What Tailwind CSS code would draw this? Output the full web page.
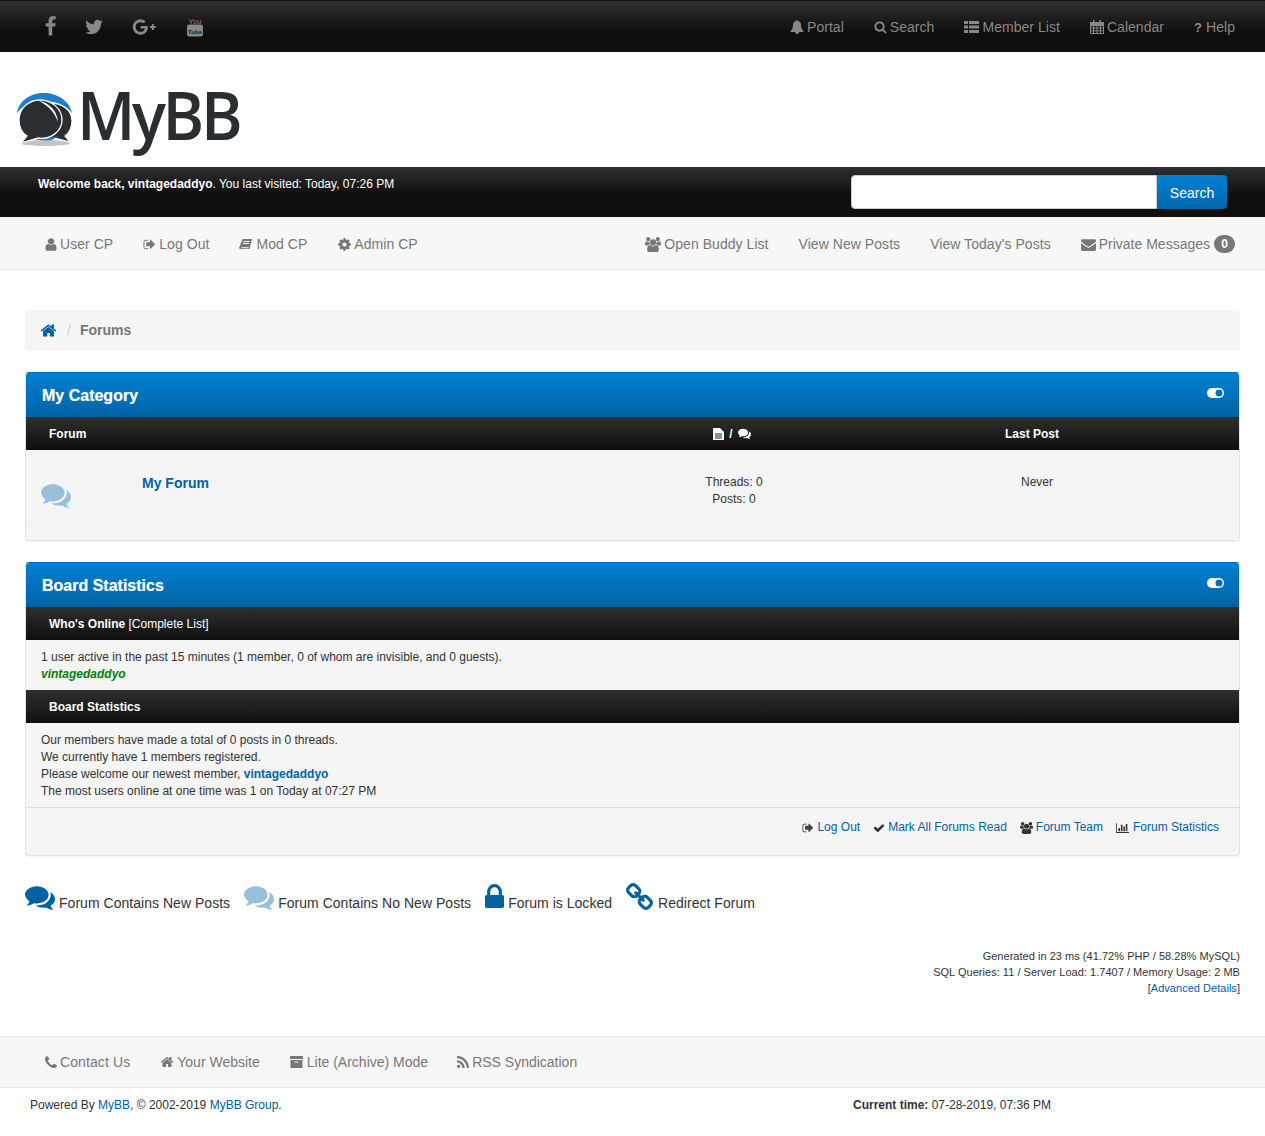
<!DOCTYPE html>
<html lang="en"><head><meta charset="utf-8"><title>Forums</title>
<script src="https://cdn.jsdelivr.net/npm/@tailwindcss/browser@4"></script></head>
<body class="bg-white font-['Liberation_Sans',Arial,sans-serif] text-[12px] leading-[17px] text-[#333]">
<div class="h-[52px] border-t border-t-[#111] bg-[linear-gradient(#2f2f2f,#0f0f0f_60%)] flex items-center justify-between pl-[30px] pr-[30px] pt-[2px] text-[14px] tracking-[0.04px] text-[#888]">
  <div class="flex items-center h-full -mt-[2px]">
    <svg class="w-[21px] h-[21px] ml-[10px] fill-[#888]" viewBox="0 0 1792 1792"><path d="M1343 12v264h-157q-86 0-116 36t-30 108v189h293l-39 296h-254v759H734V905H479V609h255V391q0-186 104-288.500T1115 0q147 0 228 12z"/></svg>
    <svg class="w-[20px] h-[20px] ml-[23px] fill-[#888]" viewBox="0 0 1792 1792"><path d="M1684 408q-67 98-162 167 1 14 1 42 0 130-38 259.500T1369.500 1125 1185 1335.500t-258 146-323 54.500q-271 0-496-145 35 4 78 4 225 0 401-138-105-2-188-64.500T285 1033q33 5 61 5 43 0 85-11-112-23-185.500-111.500T172 710v-4q68 38 146 41-66-44-105-115t-39-154q0-88 44-163 121 149 294.500 238.500T884 653q-8-38-8-74 0-134 94.500-228.500T1199 256q140 0 236 102 109-21 205-78-37 115-142 178 100-13 186-50z"/></svg>
    <svg class="w-[26px] h-[18px] ml-[27px] fill-[#888]" viewBox="0 0 2500 1792"><path d="M896 786h725q12 67 12 128 0 217-91 387.500t-259.500 266.500-386.500 96q-157 0-299-60.500T352 1440t-163.500-245T128 896t60.500-299T352 352t245-163.500T896 128q300 0 515 201l-209 201q-123-119-306-119-129 0-238.500 65T484 652.500 420 896t64 243.500 173.500 176.500 238.500 65q87 0 160-24t120-60 82-82 51.500-87 22.500-78H896V786z"/><path d="M2030 600h190v200h190v190h-190v200h-190V990h-190V800h190z"/></svg>
    <svg class="w-[18px] h-[20px] ml-[29px]" viewBox="0 0 18 20"><text x="9" y="6.500" text-anchor="middle" font-size="7.500" fill="#888" font-family="Liberation Sans">You</text><rect x="1" y="7.500" width="16" height="12" rx="2.500" fill="#888"/><text x="9" y="16.500" text-anchor="middle" font-size="6" font-weight="bold" fill="#1a1a1a" font-family="Liberation Sans">Tube</text></svg>
  </div>
  <nav class="flex items-center">
    <a class="flex items-center gap-[3px]"><svg class="w-[14px] h-[14px] -mt-[2px] fill-[#888]" viewBox="0 0 1792 1792"><path d="M912 1696q0-16-16-16-59 0-101.500-42.500T752 1536q0-16-16-16t-16 16q0 73 51.500 124.500T896 1712q16 0 16-16zm816-288q0 52-38 90t-90 38h-448q0 106-75 181t-181 75-181-75-75-181H192q-52 0-90-38t-38-90q50-42 91-88t85-119.500 74.500-158.500 50-206T384 576q0-152 117-282.500T808 135q-8-19-8-39 0-40 28-68t68-28 68 28 28 68q0 20-8 39 190 28 307 158.500T1408 576q0 139 19.500 260t50 206 74.500 158.500 85 119.500 91 88z"/></svg>Portal</a>
    <a class="flex items-center gap-[3px] ml-[30px]"><svg class="w-[13px] h-[14px] -mt-[2px] fill-[#888]" viewBox="0 0 1792 1792"><path d="M1216 832q0-185-131.500-316.500T768 384 451.500 515.500 320 832t131.500 316.500T768 1280t316.500-131.500T1216 832zm512 832q0 52-38 90t-90 38q-54 0-90-38l-343-342q-179 124-399 124-143 0-273.500-55.500t-225-150-150-225T64 832t55.500-273.500 150-225 225-150T768 128t273.500 55.500 225 150 150 225T1472 832q0 220-124 399l343 343q37 37 37 90z"/></svg>Search</a>
    <a class="flex items-center gap-[3px] ml-[30px]"><svg class="w-[15px] h-[12px] -mt-[2px] fill-[#888]" viewBox="0 0 15 12"><path d="M0 0h4v3H0zM5 0h10v3H5zM0 4.500h4v3H0zM5 4.500h10v3H5zM0 9h4v3H0zM5 9h10v3H5z"/></svg>Member List</a>
    <a class="flex items-center gap-[3px] ml-[30px]"><svg class="w-[14px] h-[14px] -mt-[2px]" viewBox="0 0 14 14"><path fill="none" stroke="#888" d="M.5 2.500h13v11H.5zM.5 5.500h13M.5 8h13M.5 10.800h13M3.500 5.500v8M7 5.500v8M10.500 5.500v8"/><path fill="#888" d="M3 0h1.500v3.500H3zM9.500 0H11v3.500H9.500zM0 2h14v3H0z"/></svg>Calendar</a>
    <a class="flex items-center gap-[3px] ml-[30px]"><span class="font-bold w-[9px] text-[13px]">?</span>Help</a>
  </nav>
</div>
<header class="h-[115px] flex items-start pl-[16px] pt-[29px]">
  <svg class="w-[58px] h-[56px] mt-[12px]" viewBox="0 0 58 56">
    <ellipse cx="29" cy="50" rx="25" ry="3" fill="#c4c4c4"/>
    <path d="M1 20C3 7 15 0 28 0s26 8 28 20c-5-7-15-12-28-12S6 13 1 20z" fill="#1d7fcb"/>
    <path d="M33 10c13 0 23 7 23 18 0 7-3 12-7 15l5 6-15-4c-9 2-18-2-20-10z" fill="#2a2e30" stroke="#fff" stroke-width="1.200"/>
    <path d="M15 44c8 2 22 2 29-2l-8 5c-6 1-15 1-21-3z" fill="#1d7fcb"/>
    <path d="M24 7C12 7 3 16 3 27c0 7 3 13 8 16L5 50l17-5c13 2 24-7 24-18C46 16 36 7 24 7z" fill="#2a2e30" stroke="#fff" stroke-width="1.300"/>
    <path d="M23 8c9 1 18 9 19 21-3-9-9-16-19-21z" fill="#fff"/>
  </svg>
  <span class="ml-[3px] font-['Open_Sans',sans-serif] font-semibold text-[67px] leading-none tracking-[-3.500px] text-[#2a2e30] inline-block origin-left scale-x-[0.945]">MyBB</span>
</header>
<div class="h-[50px] bg-[linear-gradient(#2f2f2f,#0f0f0f_55%)] flex justify-between pl-[38px] pr-[38px] pt-[8px] text-white">
  <p class="leading-[17px] pt-[1px]"><b>Welcome back, vintagedaddyo</b>. You last visited: Today, 07:26 PM</p>
  <div class="flex h-[34px]">
    <input aria-label="Search" class="w-[306px] h-[34px] bg-white rounded-l-[4px] border border-[#ccc]">
    <button class="w-[70px] h-[34px] pt-[2px] rounded-r-[4px] bg-[linear-gradient(#0080d4,#0066ac)] text-[14px] text-white text-center">Search</button>
  </div>
</div>
<nav class="h-[53px] bg-[#f7f7f7] border-b border-[#e7e7e7] flex items-center justify-between pt-[2px] px-[30px] text-[14px] tracking-[0.05px] text-[#777]">
  <div class="flex gap-[30px] pl-[15px]">
    <a class="flex items-center gap-[3px]"><svg class="w-[12px] h-[13px] fill-[#777]" viewBox="200 100 1392 1592" preserveAspectRatio="none"><path d="M1536 1399q0 109-62.500 187t-150.500 78H469q-88 0-150.500-78T256 1399q0-85 8.500-160.500t31.500-152 58.500-131 94-89T583 832q131 128 313 128t313-128q76 0 134.500 34.500t94 89 58.500 131 31.500 152 8.500 160.500zm-256-887q0 159-112.500 271.500T896 896 624.500 783.500 512 512t112.500-271.500T896 128t271.500 112.500T1280 512z"/></svg>User CP</a>
    <a class="flex items-center gap-[3px]"><svg class="w-[13px] h-[13px] fill-[#777]" viewBox="0 0 1792 1792"><path d="M704 1440q0 4 1 20t.5 26.500-3 23.500-10 19.500T672 1536H352q-119 0-203.500-84.500T64 1248V544q0-119 84.500-203.500T352 256h320q13 0 22.500 9.500T704 288q0 4 1 20t.5 26.500-3 23.500-10 19.500T672 384H352q-66 0-113 47t-47 113v704q0 66 47 113t113 47h312l11.500 1 11.500 3 8 5.500 7 9 2 13.500zm928-544q0 26-19 45l-544 544q-19 19-45 19t-45-19-19-45v-288H512q-26 0-45-19t-19-45V640q0-26 19-45t45-19h448V288q0-26 19-45t45-19 45 19l544 544q19 19 19 45z"/></svg>Log Out</a>
    <a class="flex items-center gap-[4px]"><svg class="w-[13px] h-[13px]" viewBox="0 0 13 13"><path fill="#777" d="M3.500 1H13l-2.500 10H1.300C.5 11 0 10.300.3 9.300z"/><path fill="#f7f7f7" d="M4.500 3h6v1h-6zM4 5h6v1H4zM2.500 9.200h7.200l-.3 1H2.300z"/></svg>Mod CP</a>
    <a class="flex items-center gap-[3px] ml-[1px]"><svg class="w-[13px] h-[13px] fill-[#777]" viewBox="100 100 1592 1592"><path d="M1152 896q0-106-75-181t-181-75-181 75-75 181 75 181 181 75 181-75 75-181zm512-109v222q0 12-8 23t-20 13l-185 28q-19 54-39 91 35 50 107 138 10 12 10 25t-9 23q-27 37-99 108t-94 71q-12 0-26-9l-138-108q-44 23-91 38-16 136-29 186-7 28-36 28H785q-14 0-24.500-8.500T749 1634l-28-184q-49-16-90-37l-141 107q-10 9-25 9-14 0-25-11-126-114-165-168-7-10-7-23 0-12 8-23 15-21 51-66.500t54-70.500q-27-50-41-99l-183-27q-13-2-21-12.500t-8-23.500V783q0-12 8-23t19-13l186-28q14-46 39-92-40-57-107-138-10-12-10-24 0-10 9-23 26-36 98.500-107.500T465 263q13 0 26 10l138 107q44-23 91-38 16-136 29-186 7-28 36-28h222q14 0 24.500 8.500T1043 158l28 184q49 16 90 37l142-107q9-9 24-9 13 0 25 10 129 119 165 170 7 8 7 22 0 12-8 23-15 21-51 66.500t-54 70.500q26 50 41 98l183 28q13 2 21 12.500t8 23.500z"/></svg>Admin CP</a>
  </div>
  <div class="flex items-center gap-[30px]">
    <a class="flex items-center gap-[3px]"><svg class="w-[16px] h-[15px] fill-[#777]" viewBox="0 0 1920 1792"><path d="M593 896q-162 5-265 128H194q-82 0-138-40.500T0 865q0-353 124-353 6 0 43.500 21t97.500 42.500T384 597q67 0 133-23-5 37-5 66 0 139 81 256zm1071 637q0 120-73 189.500t-194 69.500H523q-121 0-194-69.500T256 1533q0-53 3.500-103.500t14-109T300 1212t43-97.500 62-81 85.500-53.500T602 960q10 0 43 21.500t73 48 107 48 135 21.500 135-21.500 107-48 73-48 43-21.500q61 0 111.500 20t85.500 53.500 62 81 43 97.500 26.500 108.500 14 109 3.500 103.500zM640 256q0 106-75 181t-181 75-181-75-75-181 75-181 181-75 181 75 75 181zm704 384q0 159-112.500 271.500T960 1024 688.500 911.500 576 640t112.500-271.500T960 256t271.500 112.500T1344 640zm576 225q0 78-56 118.500t-138 40.500h-134q-103-123-265-128 81-117 81-256 0-29-5-66 66 23 133 23 59 0 119-21.500t97.500-42.500 43.500-21q124 0 124 353zm-128-609q0 106-75 181t-181 75-181-75-75-181 75-181 181-75 181 75 75 181z"/></svg>Open Buddy List</a>
    <a>View New Posts</a>
    <a>View Today's Posts</a>
    <a class="flex items-center gap-[3px] tracking-normal"><svg class="w-[15px] h-[15px] fill-[#777]" viewBox="0 0 1792 1792"><path d="M1792 710v794q0 66-47 113t-113 47H160q-66 0-113-47T0 1504V710q44 49 101 87 362 246 497 345 57 42 92.500 65.500t94.500 48 110 24.500h2q51 0 110-24.500t94.500-48 92.500-65.500q170-123 498-345 57-39 100-87zm0-294q0 79-49 151t-122 123q-376 261-468 325-10 7-42.500 30.500t-54 38-52 32.500-57.500 27-50 9h-2q-23 0-50-9t-57.500-27-52-32.500-54-38T639 1015q-91-64-262-182.500T172 690q-62-42-117-115.500T0 438q0-78 41.500-130T160 256h1472q65 0 112.500 47t47.500 113z"/></svg>Private Messages<span class="ml-[1px] w-[21px] h-[18px] rounded-full bg-[#777] text-white text-[12px] font-bold flex items-center justify-center">0</span></a>
  </div>
</nav>
<main class="px-[25px] pt-[40px]">
  <div class="h-[41px] bg-[#f5f5f5] rounded-[4px] flex items-center pl-[15px] text-[14px]">
    <svg class="w-[17px] h-[17px] fill-[#0062a3]" viewBox="0 0 1792 1792"><path d="M1472 992v480q0 26-19 45t-45 19h-384v-384H768v384H384q-26 0-45-19t-19-45V992q0-1 .5-3t.5-3l575-474 575 474q1 2 1 6zm223-69l-62 74q-8 9-21 11h-3q-13 0-21-7L896 424l-692 577q-12 8-24 7-13-2-21-11l-62-74q-8-10-7-23.500t11-21.500l719-599q32-26 76-26t76 26l244 204V288q0-14 9-23t23-9h192q14 0 23 9t9 23v408l219 182q10 8 11 21.500t-7 23.500z"/></svg>
    <span class="text-[#ccc] ml-[10px] mr-[9px]">/</span><b class="text-[#777]">Forums</b>
  </div>

  <section class="mt-[21px] border border-[#e3e3e3] border-t-[#0070bb] rounded-[4px] bg-[#f5f5f5] shadow-[0_1px_1px_rgba(0,0,0,.05)] overflow-hidden">
    <h2 class="h-[44px] bg-[linear-gradient(#0080d4,#0063a3)] flex items-center justify-between pl-[16px] pr-[15px] text-[16px] font-bold text-white [text-shadow:0_0_1px_rgba(255,255,255,.5)]"><span>My Category</span>
      <svg class="w-[17px] h-[10px] -mt-[4px]" viewBox="0 0 17 10"><rect width="17" height="10" rx="5" fill="#fff"/><circle cx="12" cy="5" r="3.500" fill="#0070bb"/></svg></h2>
    <div class="h-[33px] bg-[linear-gradient(#2f2f2f,#0f0f0f)] grid grid-cols-[633px_100px_1fr] items-center pt-[2px] pl-[23px] text-white font-bold">
      <span>Forum</span>
      <span class="flex items-center justify-center gap-[5px]"><svg class="w-[11px] h-[12px] -mt-[2px] fill-white" viewBox="0 0 11 12"><path d="M0 0h7l4 4v8H0z"/><path fill="#222" d="M2 5.500h7v1H2zM2 7.500h7v1H2zM2 9.500h7v1H2z"/></svg>/<svg class="w-[13px] h-[13px] -mt-[2px] fill-white" viewBox="0 0 1792 1792"><path d="M1408 768q0 139-94 257t-256.500 186.500T704 1280q-86 0-176-16-124 88-278 128-36 9-86 16h-3q-11 0-20.500-8t-11.500-21q-1-3-1-6.500t.5-6.500 2-6l2.500-5 3.500-5.500 4-5 4.500-5 4-4.500q5-6 23-25t26-29.500 22.500-29 25-38.500 20.500-44Q142 1062 71 952T0 768q0-139 94-257t256.500-186.500T704 256t353.500 68.500T1314 511t94 257zm384 256q0 120-71 224.500T1526 1425q10 24 20.500 44t25 38.500 22.500 29 26 29.500 23 25q1 1 4 4.500t4.500 5 4 5 3.500 5.500l2.500 5 2 6 .5 6.500-1 6.500q-3 14-13 22t-22 7q-50-7-86-16-154-40-278-128-90 16-176 16-271 0-472-132 58 4 88 4 161 0 309-45t264-129q125-92 192-212t67-254q0-77-23-152 129 71 204 178t75 230z"/></svg></span>
      <span class="pl-[223px]">Last Post</span>
    </div>
    <div class="h-[74px] border-b border-[#f0f0f0] grid grid-cols-[101px_532px_120px_1fr] pl-[15px]">
      <svg class="w-[30px] h-[30px] mt-[30px] fill-[#99c0da]" viewBox="0 0 1792 1792"><path d="M1408 768q0 139-94 257t-256.500 186.500T704 1280q-86 0-176-16-124 88-278 128-36 9-86 16h-3q-11 0-20.500-8t-11.500-21q-1-3-1-6.500t.5-6.500 2-6l2.500-5 3.500-5.500 4-5 4.500-5 4-4.500q5-6 23-25t26-29.500 22.500-29 25-38.500 20.500-44Q142 1062 71 952T0 768q0-139 94-257t256.500-186.500T704 256t353.500 68.500T1314 511t94 257zm384 256q0 120-71 224.500T1526 1425q10 24 20.500 44t25 38.500 22.500 29 26 29.500 23 25q1 1 4 4.500t4.500 5 4 5 3.500 5.500l2.500 5 2 6 .5 6.500-1 6.500q-3 14-13 22t-22 7q-50-7-86-16-154-40-278-128-90 16-176 16-271 0-472-132 58 4 88 4 161 0 309-45t264-129q125-92 192-212t67-254q0-77-23-152 129 71 204 178t75 230z"/></svg>
      <a class="mt-[25px] text-[14px] font-bold text-[#0062a3]">My Forum</a>
      <div class="pt-[24px] text-center">Threads: 0<br>Posts: 0</div>
      <div class="pt-[24px] pl-[227px]">Never</div>
    </div>
    <div class="h-[16px]"></div>
  </section>

  <section class="mt-[21px] border border-[#e3e3e3] border-t-[#0070bb] rounded-[4px] bg-[#f5f5f5] shadow-[0_1px_1px_rgba(0,0,0,.05)] overflow-hidden">
    <h2 class="h-[44px] bg-[linear-gradient(#0080d4,#0063a3)] flex items-center justify-between pl-[16px] pr-[15px] text-[16px] font-bold text-white [text-shadow:0_0_1px_rgba(255,255,255,.5)]"><span>Board Statistics</span>
      <svg class="w-[17px] h-[10px] -mt-[4px]" viewBox="0 0 17 10"><rect width="17" height="10" rx="5" fill="#fff"/><circle cx="12" cy="5" r="3.500" fill="#0070bb"/></svg></h2>
    <div class="h-[33px] bg-[linear-gradient(#2f2f2f,#0f0f0f)] flex items-center pt-[2px] pl-[23px] text-white"><b>Who's Online</b>&nbsp;[Complete List]</div>
    <div class="px-[15px] pt-[9px] pb-[7px]">1 user active in the past 15 minutes (1 member, 0 of whom are invisible, and 0 guests).<br><i class="font-bold text-[#008000]">vintagedaddyo</i></div>
    <div class="h-[33px] bg-[linear-gradient(#2f2f2f,#0f0f0f)] flex items-center pt-[2px] pl-[23px] text-white font-bold">Board Statistics</div>
    <div class="px-[15px] pt-[9px] pb-[7px]">Our members have made a total of 0 posts in 0 threads.<br>We currently have 1 members registered.<br>Please welcome our newest member, <b class="text-[#0062a3]">vintagedaddyo</b><br>The most users online at one time was 1 on Today at 07:27 PM</div>
    <div class="h-[48px] border-t border-[#ddd] flex justify-end gap-[13px] pt-[11px] pr-[20px] text-[#0062a3]">
      <a class="flex items-center h-[17px] gap-[3px]"><svg class="w-[12px] h-[12px] fill-[#444]" viewBox="0 0 1792 1792"><path d="M704 1440q0 4 1 20t.5 26.500-3 23.500-10 19.500T672 1536H352q-119 0-203.500-84.500T64 1248V544q0-119 84.500-203.500T352 256h320q13 0 22.500 9.500T704 288q0 4 1 20t.5 26.500-3 23.500-10 19.500T672 384H352q-66 0-113 47t-47 113v704q0 66 47 113t113 47h312l11.500 1 11.500 3 8 5.500 7 9 2 13.500zm928-544q0 26-19 45l-544 544q-19 19-45 19t-45-19-19-45v-288H512q-26 0-45-19t-19-45V640q0-26 19-45t45-19h448V288q0-26 19-45t45-19 45 19l544 544q19 19 19 45z"/></svg>Log Out</a>
      <a class="flex items-center h-[17px] gap-[3px]"><svg class="w-[12px] h-[12px] fill-[#333]" viewBox="0 0 1792 1792"><path d="M1671 566q0 40-28 68l-724 724-136 136q-28 28-68 28t-68-28l-136-136-362-362q-28-28-28-68t28-68l136-136q28-28 68-28t68 28l294 295 656-657q28-28 68-28t68 28l136 136q28 28 28 68z"/></svg>Mark All Forums Read</a>
      <a class="flex items-center h-[17px] gap-[3px]"><svg class="w-[13px] h-[12px] fill-[#333]" viewBox="0 0 1920 1792"><path d="M593 896q-162 5-265 128H194q-82 0-138-40.500T0 865q0-353 124-353 6 0 43.500 21t97.500 42.500T384 597q67 0 133-23-5 37-5 66 0 139 81 256zm1071 637q0 120-73 189.500t-194 69.500H523q-121 0-194-69.500T256 1533q0-53 3.500-103.500t14-109T300 1212t43-97.500 62-81 85.500-53.500T602 960q10 0 43 21.500t73 48 107 48 135 21.500 135-21.500 107-48 73-48 43-21.500q61 0 111.500 20t85.500 53.500 62 81 43 97.500 26.500 108.500 14 109 3.500 103.500zM640 256q0 106-75 181t-181 75-181-75-75-181 75-181 181-75 181 75 75 181zm704 384q0 159-112.500 271.500T960 1024 688.500 911.500 576 640t112.500-271.500T960 256t271.500 112.500T1344 640zm576 225q0 78-56 118.500t-138 40.500h-134q-103-123-265-128 81-117 81-256 0-29-5-66 66 23 133 23 59 0 119-21.500t97.500-42.500 43.500-21q124 0 124 353zm-128-609q0 106-75 181t-181 75-181-75-75-181 75-181 181-75 181 75 75 181z"/></svg>Forum Team</a>
      <a class="flex items-center h-[17px] gap-[4px]"><svg class="w-[13px] h-[12px] fill-[#333]" viewBox="0 0 2048 1792"><path d="M640 896v512H384V896h256zm384-512v1024H768V384h256zm1024 1152v128H0V128h128v1408h1920zm-640-896v768h-256V640h256zm384-384v1152h-256V256h256z"/></svg>Forum Statistics</a>
    </div>
  </section>

  <div class="mt-[26px] flex items-end text-[14px] tracking-[0.03px] h-[30px]">
    <span class="flex items-end gap-[4px]"><svg class="w-[30px] h-[30px] fill-[#0062a3]" viewBox="0 0 1792 1792"><path d="M1408 768q0 139-94 257t-256.500 186.500T704 1280q-86 0-176-16-124 88-278 128-36 9-86 16h-3q-11 0-20.500-8t-11.500-21q-1-3-1-6.500t.5-6.500 2-6l2.500-5 3.500-5.500 4-5 4.500-5 4-4.500q5-6 23-25t26-29.500 22.500-29 25-38.500 20.500-44Q142 1062 71 952T0 768q0-139 94-257t256.500-186.500T704 256t353.500 68.500T1314 511t94 257zm384 256q0 120-71 224.500T1526 1425q10 24 20.500 44t25 38.500 22.500 29 26 29.500 23 25q1 1 4 4.500t4.500 5 4 5 3.500 5.500l2.500 5 2 6 .5 6.500-1 6.500q-3 14-13 22t-22 7q-50-7-86-16-154-40-278-128-90 16-176 16-271 0-472-132 58 4 88 4 161 0 309-45t264-129q125-92 192-212t67-254q0-77-23-152 129 71 204 178t75 230z"/></svg><span>Forum Contains New Posts</span></span>
    <span class="flex items-end gap-[4px] ml-[14px]"><svg class="w-[30px] h-[30px] fill-[#99c0da]" viewBox="0 0 1792 1792"><path d="M1408 768q0 139-94 257t-256.500 186.500T704 1280q-86 0-176-16-124 88-278 128-36 9-86 16h-3q-11 0-20.500-8t-11.500-21q-1-3-1-6.500t.5-6.500 2-6l2.500-5 3.500-5.500 4-5 4.500-5 4-4.500q5-6 23-25t26-29.500 22.500-29 25-38.500 20.500-44Q142 1062 71 952T0 768q0-139 94-257t256.500-186.500T704 256t353.500 68.500T1314 511t94 257zm384 256q0 120-71 224.500T1526 1425q10 24 20.500 44t25 38.500 22.500 29 26 29.500 23 25q1 1 4 4.500t4.500 5 4 5 3.500 5.500l2.500 5 2 6 .5 6.500-1 6.500q-3 14-13 22t-22 7q-50-7-86-16-154-40-278-128-90 16-176 16-271 0-472-132 58 4 88 4 161 0 309-45t264-129q125-92 192-212t67-254q0-77-23-152 129 71 204 178t75 230z"/></svg><span>Forum Contains No New Posts</span></span>
    <span class="flex items-end gap-[4px] ml-[14px]"><svg class="w-[19px] h-[24px] mb-[4px] fill-[#0062a3]" viewBox="320 128 1152 1408" preserveAspectRatio="none"><path d="M640 768h512V576q0-106-75-181t-181-75-181 75-75 181v192zm832 96v576q0 40-28 68t-68 28H416q-40 0-68-28t-28-68V864q0-40 28-68t68-28h32V576q0-184 132-316t316-132 316 132 132 316v192h32q40 0 68 28t28 68z"/></svg><span>Forum is Locked</span></span>
    <span class="flex items-end gap-[5px] ml-[14px]"><svg class="w-[27px] h-[27px] mb-[2px] fill-[#0062a3]" viewBox="16 16 1632 1632"><path d="M1456 1216q0-40-28-68l-208-208q-28-28-68-28-42 0-72 32 3 3 19 18.500t21.500 21.500 15 19 13 25.500 3.500 27.500q0 40-28 68t-68 28q-15 0-27.500-3.500t-25.500-13-19-15-21.500-21.500-18.500-19q-33 31-33 73 0 40 28 68l206 207q27 27 68 27 40 0 68-26l147-146q28-28 28-67zM753 511q0-40-28-68L519 236q-28-28-68-28-39 0-68 27L236 381q-28 28-28 67 0 40 28 68l208 208q27 27 68 27 42 0 72-31-3-3-19-18.500T543.500 680t-15-19-13-25.500T512 608q0-40 28-68t68-28q15 0 27.500 3.500t25.500 13 19 15 21.500 21.500 18.500 19q33-31 33-73zm895 705q0 120-85 203l-147 146q-83 83-203 83-121 0-204-85L803 1356q-83-83-83-203 0-123 88-209l-88-88q-86 88-208 88-120 0-204-84L100 652q-84-84-84-204t85-203L248 99q83-83 203-83 121 0 204 85l206 207q83 83 83 203 0 123-88 209l88 88q86-88 208-88 120 0 204 84l208 208q84 84 84 204z"/></svg><span>Redirect Forum</span></span>
  </div>

  <div class="mt-[36px] text-right text-[11px] leading-[16px] tracking-[0.03px]">Generated in 23 ms (41.72% PHP / 58.28% MySQL)<br>SQL Queries: 11 / Server Load: 1.7407 / Memory Usage: 2 MB<br>[<a class="text-[#0062a3]">Advanced Details</a>]</div>
</main>
<footer class="mt-[40px]">
  <nav class="h-[52px] bg-[#f7f7f7] border-y border-[#e7e7e7] flex items-center gap-[30px] pl-[45px] text-[14px] text-[#777]">
    <a class="flex items-center gap-[3px] tracking-[0.1px]"><svg class="w-[12px] h-[13px] fill-[#777]" viewBox="190 160 1420 1440"><path d="M1600 1240q0 27-10 70.500t-21 68.500q-21 50-122 106-94 51-186 51-27 0-53-3.500t-57.500-12.500-47-14.500-55.500-20.500-49-18q-98-35-175-83-127-79-264-216T344 904q-48-77-83-175-3-9-18-49t-20.500-55.500-14.500-47T195.500 520 192 467q0-92 51-186 56-101 106-122 25-11 68.500-21t70.500-10q14 0 21 3 18 6 53 76 11 19 30 54t35 63.500 31 53.500q3 4 17.500 25t21.500 35.500 7 28.500q0 20-28.500 50t-62 55-62 53-28.500 46q0 9 5 22.500t8.500 20.500 14 24 11.500 19q76 137 174 235t235 174q2 1 19 11.500t24 14 20.500 8.500 22.500 5q18 0 46-28.500t53-62 55-62 50-28.500q14 0 28.500 7t35.500 21.500 25 17.500q25 15 53.500 31t63.500 35 54 30q70 35 76 53 3 7 3 21z"/></svg>Contact Us</a>
    <a class="flex items-center gap-[3px]"><svg class="w-[14px] h-[14px] fill-[#777]" viewBox="0 0 1792 1792"><path d="M1472 992v480q0 26-19 45t-45 19h-384v-384H768v384H384q-26 0-45-19t-19-45V992q0-1 .5-3t.5-3l575-474 575 474q1 2 1 6zm223-69l-62 74q-8 9-21 11h-3q-13 0-21-7L896 424l-692 577q-12 8-24 7-13-2-21-11l-62-74q-8-10-7-23.500t11-21.500l719-599q32-26 76-26t76 26l244 204V288q0-14 9-23t23-9h192q14 0 23 9t9 23v408l219 182q10 8 11 21.500t-7 23.500z"/></svg>Your Website</a>
    <a class="flex items-center gap-[4px]"><svg class="w-[13px] h-[12px] fill-[#777]" viewBox="0 0 13 12"><path d="M0 0h13v3H0z"/><path fill-rule="evenodd" d="M.5 4h12v8H.5zM4.500 5.500v1h4v-1z"/></svg>Lite (Archive) Mode</a>
    <a class="flex items-center gap-[3px] -ml-[1px]"><svg class="w-[12px] h-[12px] fill-[#777]" viewBox="192 128 1408 1408"><path d="M576 1344q0 80-56 136t-136 56-136-56-56-136 56-136 136-56 136 56 56 136zm512 123q2 28-17 48-18 21-47 21H889q-25 0-43-16.500t-20-41.500q-22-229-184.500-391.500T250 902q-25-2-41.500-20T192 839V704q0-29 21-47 17-17 43-17h5q160 13 306 80.500T826 902q114 113 181.500 259t80.500 306zm512 2q2 27-18 47-18 20-46 20h-143q-26 0-44.500-17.500T1329 1476q-12-215-101-408.500t-231.500-336-336-231.500T252 398q-25-1-42.500-19.500T192 335V192q0-28 20-46 18-18 44-18h3q262 13 501.500 120T1186 542q187 186 294 425.500T1600 1469z"/></svg>RSS Syndication</a>
  </nav>
  <div class="grid grid-cols-[823px_1fr] pl-[30px] pt-[9px] pb-[22px]">
    <p>Powered By <a class="text-[#0062a3]">MyBB</a>, © 2002-2019 <a class="text-[#0062a3]">MyBB Group</a>.</p>
    <p><b>Current time:</b> 07-28-2019, 07:36 PM</p>
  </div>
</footer>
</body></html>
